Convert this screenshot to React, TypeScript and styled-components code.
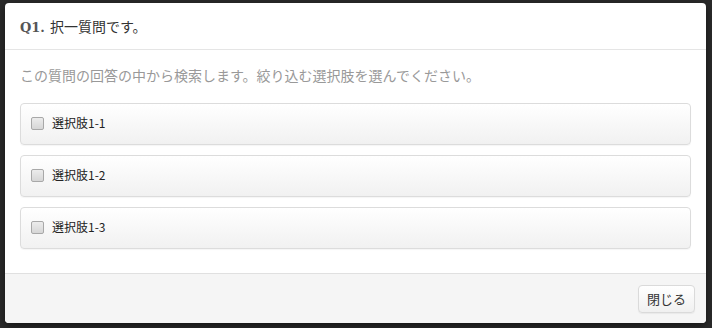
import React from 'react'
import styled, { createGlobalStyle } from 'styled-components'

const GlobalStyle = createGlobalStyle`
  html, body {
    margin: 0;
    padding: 0;
    background: #2a2a2a;
  }
  body {
    font-family: "Liberation Sans", "Noto Sans CJK JP", sans-serif;
    color: #333;
  }
`

const Backdrop = styled.div`
  width: 712px;
  height: 328px;
  padding: 3px 6px 5px 5px;
  box-sizing: border-box;
  background: #2a2a2a;
`

const Modal = styled.div`
  display: flex;
  flex-direction: column;
  height: 100%;
  background: #fff;
  border-radius: 4px;
  overflow: hidden;
  box-shadow: 0 3px 9px rgba(0, 0, 0, 0.5);
`

const Header = styled.div`
  height: 47px;
  box-sizing: border-box;
  padding: 0 15px;
  display: flex;
  align-items: center;
  border-bottom: 1px solid #e5e5e5;
`

const Title = styled.h4`
  margin: 0;
  font-size: 14px;
  font-weight: normal;
  color: #333;
  font-family: "Noto Sans CJK JP", sans-serif;
`

const QNum = styled.strong`
  font-family: "DejaVu Serif", "Liberation Serif", serif;
  font-weight: bold;
  color: #555;
  font-size: 13px;
  margin-right: 5px;
`

const Body = styled.div`
  flex: 1;
  padding: 15px 15px 0 15px;
  display: flex;
  flex-direction: column;
`

const Lead = styled.p`
  margin: 0 0 18px 0;
  font-size: 14px;
  line-height: 20px;
  color: #999;
  font-family: "Noto Sans CJK JP", sans-serif;
`

const ChoiceList = styled.div`
  display: flex;
  flex-direction: column;
  gap: 10px;
`

const Choice = styled.label`
  display: flex;
  align-items: center;
  height: 42px;
  box-sizing: border-box;
  padding: 0 10px 1px 10px;
  border: 1px solid #dcdcdc;
  border-radius: 4px;
  background: linear-gradient(to bottom, #ffffff 0%, #f1f1f1 100%);
  box-shadow: 0 1px 1px rgba(0, 0, 0, 0.04);
  cursor: pointer;
`

const Box = styled.span`
  width: 11px;
  height: 11px;
  border: 1px solid #a8a8a8;
  border-radius: 2px;
  background: linear-gradient(to bottom, #ececec, #d6d6d6);
  margin-right: 8px;
`

const ChoiceText = styled.span`
  font-size: 12px;
  line-height: 16px;
  margin-top: -2px;
  color: #222;
  font-family: "Noto Sans CJK JP", sans-serif;
`

const Footer = styled.div`
  height: 50px;
  box-sizing: border-box;
  border-top: 1px solid #e0e0e0;
  background: #f5f5f5;
  display: flex;
  align-items: center;
  justify-content: flex-end;
  padding: 0 11px 0 15px;
`

const Button = styled.button`
  width: 57px;
  height: 28px;
  border: 1px solid #dadada;
  border-radius: 4px;
  background: linear-gradient(to bottom, #ffffff, #f0f0f0);
  font-size: 13px;
  color: #333;
  font-family: "Noto Sans CJK JP", sans-serif;
  padding: 0;
  box-shadow: 0 1px 1px rgba(0, 0, 0, 0.05);
`

const choices = ['選択肢1-1', '選択肢1-2', '選択肢1-3']

const App: React.FC = () => {
  return (
    <>
      <GlobalStyle />
      <Backdrop>
        <Modal>
          <Header>
            <Title>
              <QNum>Q1.</QNum>択一質問です。
            </Title>
          </Header>
          <Body>
            <Lead>この質問の回答の中から検索します。絞り込む選択肢を選んでください。</Lead>
            <ChoiceList>
              {choices.map((c) => (
                <Choice key={c}>
                  <Box />
                  <ChoiceText>{c}</ChoiceText>
                </Choice>
              ))}
            </ChoiceList>
          </Body>
          <Footer>
            <Button>閉じる</Button>
          </Footer>
        </Modal>
      </Backdrop>
    </>
  )
}

export default App
